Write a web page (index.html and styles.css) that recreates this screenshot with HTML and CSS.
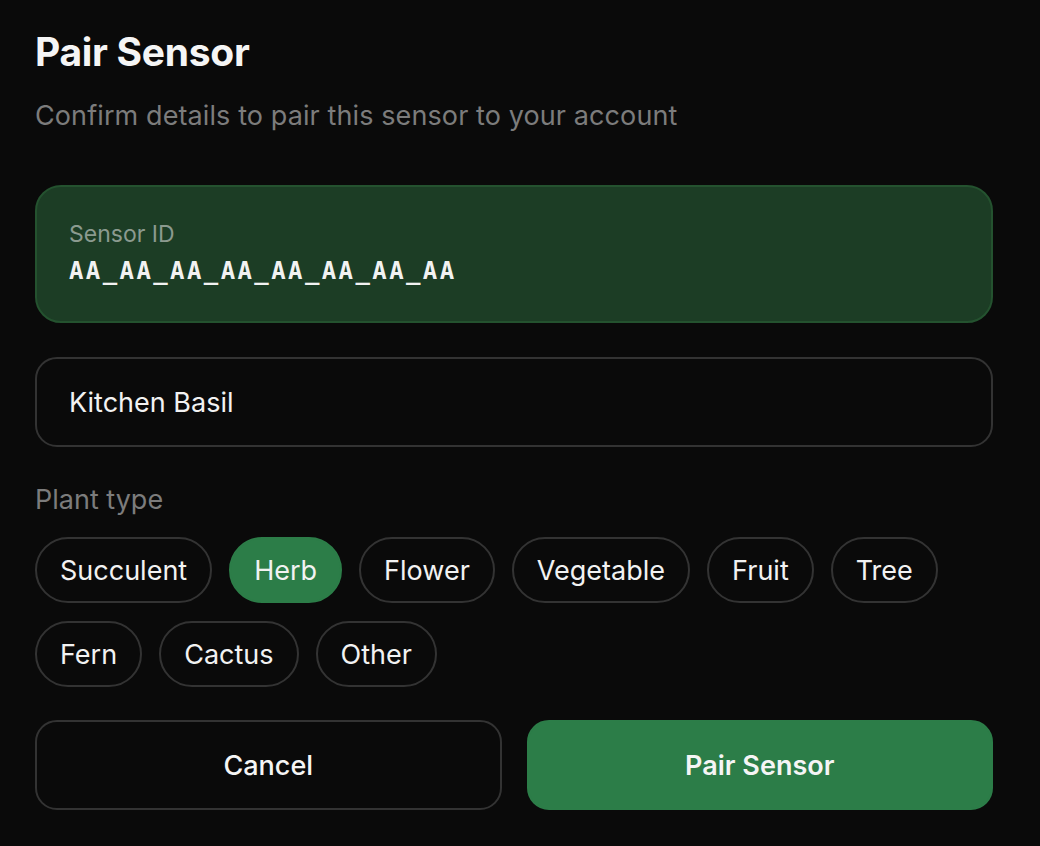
FILE: index.html
```html
<!DOCTYPE html>
<html lang="en">
<head>
<meta charset="utf-8">
<title>Pair Sensor</title>
<link rel="stylesheet" href="styles.css">
</head>
<body>
<main class="page">
  <h1 class="title">Pair Sensor</h1>
  <p class="subtitle">Confirm details to pair this sensor to your account</p>

  <section class="id-card">
    <div class="id-label">Sensor ID</div>
    <div class="id-value">AA_AA_AA_AA_AA_AA_AA_AA</div>
  </section>

  <div class="name-input">Kitchen Basil</div>

  <div class="field-label">Plant type</div>
  <div class="chips">
    <span class="chip">Succulent</span>
    <span class="chip chip-active">Herb</span>
    <span class="chip">Flower</span>
    <span class="chip">Vegetable</span>
    <span class="chip">Fruit</span>
    <span class="chip">Tree</span>
    <span class="chip">Fern</span>
    <span class="chip">Cactus</span>
    <span class="chip">Other</span>
  </div>

  <div class="actions">
    <button class="btn btn-secondary">Cancel</button>
    <button class="btn btn-primary">Pair Sensor</button>
  </div>
</main>
</body>
</html>
```

FILE: styles.css
```css
html, body {
  margin: 0;
  padding: 0;
  background: #0a0a0a;
}
body {
  font-family: Inter, "Noto Sans", sans-serif;
  color: #f2f2f2;
}
.page {
  width: 958px;
  padding: 26px 0 0 35px;
  display: flex;
  flex-direction: column;
}
.title {
  margin: 0;
  font-size: 39px;
  line-height: 52px;
  font-weight: 700;
  color: #f5f5f5;
  letter-spacing: -0.3px;
}
.subtitle {
  margin: 20px 0 0;
  font-size: 27px;
  line-height: 36px;
  letter-spacing: 0.1px;
  color: #7c7c7c;
}
.id-card {
  margin-top: 51px;
  height: 138px;
  box-sizing: border-box;
  border: 2px solid #24522f;
  background: #1c3d25;
  border-radius: 26px;
  padding: 32px 32px 0;
}
.id-label {
  font-size: 23px;
  line-height: 30px;
  color: #8b9a8f;
}
.id-value {
  margin-top: 5px;
  font-family: "DejaVu Sans Mono", "Liberation Mono", monospace;
  font-weight: 700;
  font-size: 24px;
  line-height: 34px;
  letter-spacing: 2.4px;
  color: #f2f2f2;
}
.name-input {
  margin-top: 34px;
  height: 90px;
  box-sizing: border-box;
  border: 2px solid #333;
  border-radius: 22px;
  padding: 0 32px;
  display: flex;
  align-items: center;
  font-size: 27px;
  color: #f2f2f2;
}
.field-label {
  margin-top: 35px;
  font-size: 27px;
  line-height: 36px;
  color: #7c7c7c;
}
.chips {
  margin-top: 19px;
  display: flex;
  flex-wrap: wrap;
  column-gap: 17px;
  row-gap: 18px;
}
.chip {
  height: 66px;
  box-sizing: border-box;
  border: 2px solid #333;
  border-radius: 33px;
  padding: 0 23px;
  display: inline-flex;
  align-items: center;
  font-size: 27px;
  color: #f2f2f2;
}
.chip-active {
  background: #2c7d48;
  border-color: #2c7d48;
}
.actions {
  margin-top: 33px;
  display: grid;
  grid-template-columns: 1fr 1fr;
  column-gap: 25px;
}
.btn {
  height: 90px;
  border-radius: 22px;
  font-family: Inter, "Noto Sans", sans-serif;
  font-size: 27px;
  color: #f5f5f5;
  cursor: pointer;
}
.btn-secondary {
  background: #0a0a0a;
  border: 2px solid #333;
  font-weight: 500;
}
.btn-primary {
  background: #2c7d48;
  border: 2px solid #2c7d48;
  font-weight: 600;
}
```
